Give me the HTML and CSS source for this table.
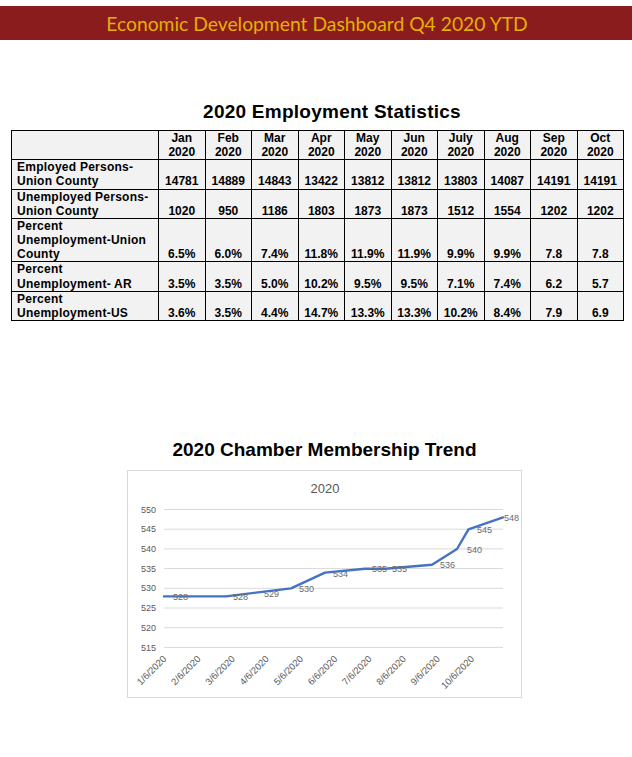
FILE: index.html
```html
<!DOCTYPE html>
<html lang="en">
<head>
<meta charset="utf-8">
<title>Economic Development Dashboard Q4 2020 YTD</title>
<link rel="stylesheet" href="styles.css">
</head>
<body>
<header class="banner"><span class="banner-text">Economic Development Dashboard Q4 2020 YTD</span></header>

<section class="stats">
  <h2 class="stats-title">2020 Employment Statistics</h2>
  <table class="stats-table">
    <colgroup>
      <col class="col-label">
      <col class="col-month"><col class="col-month"><col class="col-month"><col class="col-month"><col class="col-month">
      <col class="col-month"><col class="col-month"><col class="col-month"><col class="col-month"><col class="col-month">
    </colgroup>
    <thead>
      <tr>
        <th class="label"></th>
        <th>Jan<br>2020</th><th>Feb<br>2020</th><th>Mar<br>2020</th><th>Apr<br>2020</th><th>May<br>2020</th>
        <th>Jun<br>2020</th><th>July<br>2020</th><th>Aug<br>2020</th><th>Sep<br>2020</th><th>Oct<br>2020</th>
      </tr>
    </thead>
    <tbody>
      <tr>
        <td class="label">Employed Persons-<br>Union County</td>
        <td>14781</td><td>14889</td><td>14843</td><td>13422</td><td>13812</td><td>13812</td><td>13803</td><td>14087</td><td>14191</td><td>14191</td>
      </tr>
      <tr>
        <td class="label">Unemployed Persons-<br>Union County</td>
        <td>1020</td><td>950</td><td>1186</td><td>1803</td><td>1873</td><td>1873</td><td>1512</td><td>1554</td><td>1202</td><td>1202</td>
      </tr>
      <tr>
        <td class="label">Percent<br>Unemployment-Union<br>County</td>
        <td>6.5%</td><td>6.0%</td><td>7.4%</td><td>11.8%</td><td>11.9%</td><td>11.9%</td><td>9.9%</td><td>9.9%</td><td>7.8</td><td>7.8</td>
      </tr>
      <tr>
        <td class="label">Percent<br>Unemployment- AR</td>
        <td>3.5%</td><td>3.5%</td><td>5.0%</td><td>10.2%</td><td>9.5%</td><td>9.5%</td><td>7.1%</td><td>7.4%</td><td>6.2</td><td>5.7</td>
      </tr>
      <tr>
        <td class="label">Percent<br>Unemployment-US</td>
        <td>3.6%</td><td>3.5%</td><td>4.4%</td><td>14.7%</td><td>13.3%</td><td>13.3%</td><td>10.2%</td><td>8.4%</td><td>7.9</td><td>6.9</td>
      </tr>
    </tbody>
  </table>
</section>

<section class="trend">
  <h2 class="trend-title">2020 Chamber Membership Trend</h2>
  <div class="chart-box">
    <svg class="chart" width="393" height="226" viewBox="128 471 393 226" xmlns="http://www.w3.org/2000/svg">
      <text class="chart-name" x="325" y="492.7" text-anchor="middle">2020</text>
      <g class="grid">
        <line x1="164" x2="503" y1="509.5" y2="509.5"/>
        <line x1="164" x2="503" y1="529.2" y2="529.2"/>
        <line x1="164" x2="503" y1="548.9" y2="548.9"/>
        <line x1="164" x2="503" y1="568.6" y2="568.6"/>
        <line x1="164" x2="503" y1="588.3" y2="588.3"/>
        <line x1="164" x2="503" y1="608" y2="608"/>
        <line x1="164" x2="503" y1="627.7" y2="627.7"/>
        <line x1="164" x2="503" y1="647.4" y2="647.4"/>
      </g>
      <g class="axis-y" text-anchor="end">
        <text x="156" y="512.6">550</text>
        <text x="156" y="532.3">545</text>
        <text x="156" y="552">540</text>
        <text x="156" y="571.7">535</text>
        <text x="156" y="591.4">530</text>
        <text x="156" y="611.1">525</text>
        <text x="156" y="630.8">520</text>
        <text x="156" y="650.5">515</text>
      </g>
      <g class="axis-x" text-anchor="end">
        <text x="167" y="659.5" transform="rotate(-45 167 659.5)">1/6/2020</text>
        <text x="201.2" y="659.5" transform="rotate(-45 201.2 659.5)">2/6/2020</text>
        <text x="235.4" y="659.5" transform="rotate(-45 235.4 659.5)">3/6/2020</text>
        <text x="269.6" y="659.5" transform="rotate(-45 269.6 659.5)">4/6/2020</text>
        <text x="303.8" y="659.5" transform="rotate(-45 303.8 659.5)">5/6/2020</text>
        <text x="338" y="659.5" transform="rotate(-45 338 659.5)">6/6/2020</text>
        <text x="372.2" y="659.5" transform="rotate(-45 372.2 659.5)">7/6/2020</text>
        <text x="406.4" y="659.5" transform="rotate(-45 406.4 659.5)">8/6/2020</text>
        <text x="440.6" y="659.5" transform="rotate(-45 440.6 659.5)">9/6/2020</text>
        <text x="474.8" y="659.5" transform="rotate(-45 474.8 659.5)">10/6/2020</text>
      </g>
      <polyline class="series" points="164,596.4 226,596.4 258,592.4 291,588.4 325,572.6 365,568.7 385,568.7 432,564.8 457,549 468.5,529.3 503,517.4"/>
      <g class="data-labels">
        <text x="173" y="600.2">528</text>
        <text x="233" y="599.9">528</text>
        <text x="264" y="596.5">529</text>
        <text x="299" y="592.2">530</text>
        <text x="333" y="577.2">534</text>
        <text x="372" y="572.2">535</text>
        <text x="392" y="572.2">535</text>
        <text x="440" y="568.2">536</text>
        <text x="467" y="552.5">540</text>
        <text x="477" y="533.2">545</text>
        <text x="504" y="520.9">548</text>
      </g>
    </svg>
  </div>
</section>
</body>
</html>
```
FILE: styles.css
```css
body {
  margin: 0;
  background: #ffffff;
  color: #000000;
  font-family: "Liberation Sans", Arial, sans-serif;
}

.banner {
  margin-top: 6px;
  height: 34px;
  background: #8b1c1e;
  display: flex;
  align-items: center;
  justify-content: center;
}

.banner-text {
  font-family: Lato, "Open Sans", sans-serif;
  font-size: 19.3px;
  color: #e5b000;
  padding-left: 2px;
}

.stats-title {
  margin: 61px 0 7px;
  padding-left: 32px;
  text-align: center;
  font-size: 19px;
  line-height: 22px;
  letter-spacing: 0.25px;
  font-weight: bold;
}

.stats-table {
  margin-left: 11px;
  width: 612px;
  border-collapse: collapse;
  table-layout: fixed;
  font-size: 12px;
  font-weight: bold;
  line-height: 14.15px;
}

.col-label {
  width: 147px;
}

.col-month {
  width: 46.5px;
}

.stats-table th,
.stats-table td {
  border: 1px solid #000000;
  padding: 0;
  background: #f2f2f2;
  vertical-align: bottom;
  text-align: center;
  font-weight: bold;
  white-space: nowrap;
}

.stats-table .label {
  text-align: left;
  padding-left: 5px;
  letter-spacing: 0.25px;
}

.trend-title {
  margin: 118px 0 0;
  padding-left: 17px;
  text-align: center;
  font-size: 19px;
  line-height: 22px;
  font-weight: bold;
}

.chart-box {
  margin: 9px 0 0 127px;
  width: 393px;
  height: 226px;
  border: 1px solid #d9d9d9;
  background: #ffffff;
}

.chart {
  display: block;
  font-family: "Liberation Sans", Arial, sans-serif;
}

.chart-name {
  font-size: 13px;
  fill: #595959;
}

.grid line {
  stroke: #d9d9d9;
  stroke-width: 1;
}

.axis-y text {
  font-size: 9px;
  fill: #595959;
}

.axis-x text {
  font-size: 9.5px;
  fill: #595959;
}

.series {
  fill: none;
  stroke: #4472c4;
  stroke-width: 2.4;
  stroke-linejoin: round;
  stroke-linecap: round;
}

.data-labels text {
  font-size: 9px;
  fill: #6b6b6b;
}
```
